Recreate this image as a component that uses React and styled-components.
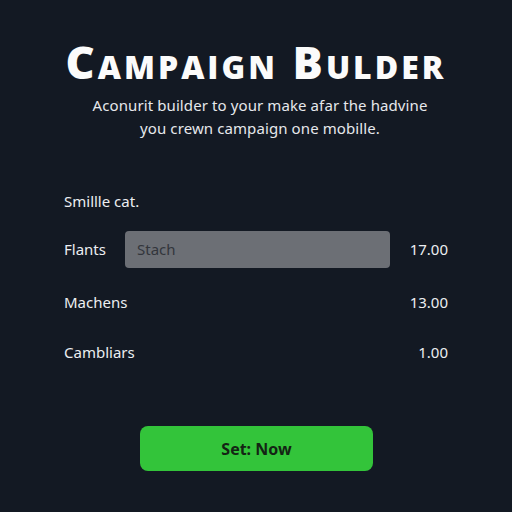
import { styled, createGlobalStyle } from 'styled-components'

const Global = createGlobalStyle`
  html, body { margin: 0; padding: 0; background: #131923; }
  body { font-family: "Noto Sans", "Open Sans", sans-serif; color: #f2f3f5; }
`

const Page = styled.div`
  width: 512px;
  height: 512px;
  box-sizing: border-box;
  padding: 36px 64px 0 64px;
  display: flex;
  flex-direction: column;
  align-items: stretch;
`

const Title = styled.h1`
  margin: 0;
  text-align: center;
  font-family: "Open Sans", "Noto Sans", sans-serif;
  font-weight: 800;
  font-size: 45px;
  font-variant: small-caps;
  letter-spacing: 3px;
  line-height: 52px;
  color: #fbfbfb;
  white-space: nowrap;
`

const Subtitle = styled.p`
  margin: 6px 0 0 8px;
  text-align: center;
  font-size: 15px;
  letter-spacing: 0.1px;
  line-height: 23px;
  color: #e6e8ec;
`

const Section = styled.div`
  margin-top: 51px;
  display: flex;
  flex-direction: column;
`

const Caption = styled.div`
  font-size: 15px;
  line-height: 20px;
  color: #eceef1;
  margin-bottom: 15px;
`

const Row = styled.div`
  display: grid;
  grid-template-columns: 61px 1fr 58px;
  align-items: center;
  height: ${p => p.$h || 50}px;
  font-size: 15px;
  color: #eceef1;
`

const Field = styled.div`
  height: 37px;
  box-sizing: border-box;
  background: #6c6f75;
  border-radius: 4px;
  padding: 0 12px;
  display: flex;
  align-items: center;
  color: #33363c;
  font-size: 15px;
`

const Value = styled.span`
  grid-column: 3;
  text-align: right;
`

const ButtonWrap = styled.div`
  margin-top: 54px;
  display: flex;
  justify-content: center;
`

const Button = styled.button`
  width: 233px;
  height: 45px;
  border: none;
  border-radius: 8px;
  background: #33c43a;
  color: #142414;
  font-family: "Noto Sans", sans-serif;
  font-weight: 700;
  font-size: 16px;
  margin-left: 1px;
`

export default function App() {
  return (
    <>
      <Global />
      <Page>
        <Title>Campaign Bulder</Title>
        <Subtitle>
          Aconurit builder to your make afar the hadvine
          <br />
          you crewn campaign one mobille.
        </Subtitle>
        <Section>
          <Caption>Smillle cat.</Caption>
          <Row $h={46}>
            <span>Flants</span>
            <Field>Stach</Field>
            <Value>17.00</Value>
          </Row>
          <Row $h={60}>
            <span>Machens</span>
            <Value>13.00</Value>
          </Row>
          <Row $h={40}>
            <span>Cambliars</span>
            <Value>1.00</Value>
          </Row>
        </Section>
        <ButtonWrap>
          <Button>Set: Now</Button>
        </ButtonWrap>
      </Page>
    </>
  )
}
